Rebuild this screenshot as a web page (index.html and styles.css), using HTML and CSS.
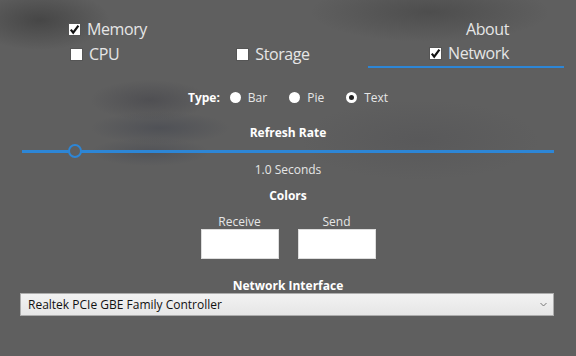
FILE: index.html
```html
<!DOCTYPE html>
<html lang="en">
<head>
	<meta charset="UTF-8">
	<title>Settings</title>
	<link rel="stylesheet" href="styles.css">
</head>
<body>
	<div class="panel">
		<!-- 标签页 -->
		<div class="tabs">
			<div class="tabRow rowOne">
				<div class="tab first">
					<svg class="check" width="13" height="13" viewBox="0 0 13 13"><rect x="0.5" y="0.5" width="12" height="12" fill="#fff" stroke="#555"/><path d="M2.8 6.6 L5.2 9.6 L10.4 2.6" fill="none" stroke="#111" stroke-width="2.2"/></svg>Memory
				</div>
				<div class="tab about">About</div>
			</div>
			<div class="tabRow rowTwo">
				<div class="tab first">
					<svg class="check" width="13" height="13" viewBox="0 0 13 13"><rect x="0.5" y="0.5" width="12" height="12" fill="#fff" stroke="#555"/></svg>CPU
				</div>
				<div class="tab mid">
					<svg class="check" width="13" height="13" viewBox="0 0 13 13"><rect x="0.5" y="0.5" width="12" height="12" fill="#fff" stroke="#555"/></svg>Storage
				</div>
				<div class="tab mid active">
					<svg class="check" width="13" height="13" viewBox="0 0 13 13"><rect x="0.5" y="0.5" width="12" height="12" fill="#fff" stroke="#555"/><path d="M2.8 6.6 L5.2 9.6 L10.4 2.6" fill="none" stroke="#111" stroke-width="2.2"/></svg>Network
				</div>
			</div>
		</div>
		<!-- 类型 -->
		<div class="typeRow">
			<span class="label">Type:</span>
			<span class="radio"></span><span class="opt">Bar</span>
			<span class="radio"></span><span class="opt">Pie</span>
			<span class="radio sel"></span><span class="opt">Text</span>
		</div>
		<div class="title refresh">Refresh Rate</div>
		<div class="slider">
			<div class="track"></div>
			<div class="thumb"></div>
		</div>
		<div class="value">1.0 Seconds</div>
		<div class="title colors">Colors</div>
		<div class="swatches">
			<div class="swatch">
				<div class="swName">Receive</div>
				<div class="box"></div>
			</div>
			<div class="swatch">
				<div class="swName">Send</div>
				<div class="box"></div>
			</div>
		</div>
		<div class="title iface">Network Interface</div>
		<div class="select">
			<span>Realtek PCIe GBE Family Controller</span>
			<svg width="7" height="5" viewBox="0 0 7 5"><path d="M0.5 1 L3.5 4 L6.5 1" fill="none" stroke="#777" stroke-width="1"/></svg>
		</div>
	</div>
</body>
</html>
```

FILE: styles.css
```css
*{
	margin: 0;
	padding: 0;
	box-sizing: border-box;
}
html,body{
	width: 576px;
	height: 356px;
	overflow: hidden;
}
body{
	font-family: "Open Sans", "Noto Sans", sans-serif;
	color: #e6e6e6;
	background-color: #5f5f5f;
	/* 模糊背景 */
	background-image:
		radial-gradient(ellipse 70px 30px at 40px 20px, rgba(40,40,40,0.45), rgba(40,40,40,0)),
		radial-gradient(ellipse 120px 30px at 430px 12px, rgba(45,45,45,0.35), rgba(45,45,45,0)),
		radial-gradient(ellipse 60px 20px at 150px 100px, rgba(50,50,60,0.35), rgba(50,50,60,0)),
		radial-gradient(ellipse 70px 16px at 160px 128px, rgba(50,55,70,0.35), rgba(50,55,70,0)),
		radial-gradient(ellipse 60px 14px at 150px 152px, rgba(50,55,70,0.3), rgba(50,55,70,0)),
		radial-gradient(ellipse 120px 40px at 420px 140px, rgba(70,70,75,0.25), rgba(70,70,75,0));
}
.panel{
	padding-top: 17px;
}
/*标签页*/
.tabRow{
	display: grid;
	font-size: 16px;
	letter-spacing: -0.4px;
}
.rowOne{
	grid-template-columns: 368px 196px;
	height: 24px;
}
.rowTwo{
	grid-template-columns: 172px 196px 196px;
	height: 27px;
	padding-top: 1px;
}
.tab{
	display: flex;
	align-items: center;
	height: 24px;
	white-space: nowrap;
}
.rowOne .first{
	padding-left: 68px;
}
.rowTwo .first{
	padding-left: 70px;
}
.about{
	padding-left: 98px;
}
.mid{
	justify-content: center;
	padding-left: 6px;
}
.active{
	height: 26px;
	padding-bottom: 2px;
	border-bottom: 2px solid #2d86d6;
}
.check{
	flex: none;
	margin-right: 6px;
}
/*类型*/
.typeRow{
	display: flex;
	align-items: center;
	justify-content: center;
	height: 20px;
	margin-top: 19px;
	font-size: 12px;
}
.label{
	font-weight: bold;
	color: #fff;
	margin-right: 10px;
}
.radio{
	width: 11px;
	height: 11px;
	border-radius: 50%;
	background: #fff;
	margin-right: 7px;
}
.radio.sel{
	background: #222;
	border: 3px solid #fff;
}
.opt{
	margin-right: 22px;
}
.opt:last-child{
	margin-right: 0;
}
.title{
	text-align: center;
	font-size: 12px;
	font-weight: bold;
	color: #fff;
}
.refresh{
	margin-top: 17px;
}
/*滑动条*/
.slider{
	position: relative;
	height: 18px;
	margin: 1px 22px 0 22px;
	display: flex;
	align-items: center;
}
.track{
	width: 100%;
	height: 3px;
	background: #2d86d6;
}
.thumb{
	position: absolute;
	left: 46px;
	top: 2px;
	width: 14px;
	height: 14px;
	border-radius: 50%;
	border: 2px solid #2d86d6;
	background: #5f5f5f;
}
.value{
	text-align: center;
	font-size: 12px;
	margin-top: 1px;
}
.colors{
	margin-top: 9px;
}
/*颜色*/
.swatches{
	display: flex;
	justify-content: center;
	gap: 19px;
	margin-top: 10px;
}
.swatch{
	display: flex;
	flex-direction: column;
	align-items: center;
	font-size: 12px;
}
.swName{
	line-height: 15px;
}
.box{
	width: 78px;
	height: 30px;
	background: #fff;
	border: 1px solid #ddd;
}
.iface{
	margin-top: 18px;
}
/*下拉框*/
.select{
	display: flex;
	align-items: center;
	justify-content: space-between;
	margin: -1px 22px 0 20px;
	height: 23px;
	padding: 0 6px 0 7px;
	background: linear-gradient(#f2f2f2, #e6e6e6);
	border: 1px solid #adadad;
	font-size: 12px;
	color: #111;
}
```
